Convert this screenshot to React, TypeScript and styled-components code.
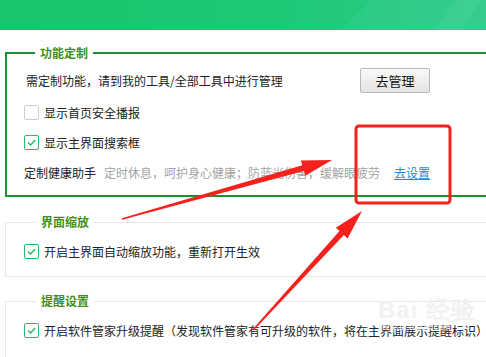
import React from 'react'
import styled, { createGlobalStyle } from 'styled-components'

const GlobalStyle = createGlobalStyle`
  html, body {
    margin: 0;
    padding: 0;
    background: #fff;
  }
  body {
    width: 486px;
    height: 357px;
    overflow: hidden;
    font-family: 'Noto Sans CJK SC', 'Microsoft YaHei', sans-serif;
    font-size: 12px;
    color: #222;
  }
`

const Page = styled.div`
  position: relative;
  width: 486px;
  height: 357px;
  overflow: hidden;
`
const TopBar = styled.div`
  height: 30px;
  background:
    linear-gradient(125deg, transparent 90%, rgba(255, 255, 255, 0.05) 90%, rgba(255, 255, 255, 0.05) 95%, transparent 95%),
    linear-gradient(135deg, transparent 72%, rgba(255, 255, 255, 0.04) 72%),
    linear-gradient(90deg, #19c46c 0%, #1ec876 55%, #2dcb8a 100%);
`
const Body = styled.div`
  padding: 15px 0 0 5px;
  margin-right: -20px;
`
const Group = styled.fieldset<{ $active?: boolean; $gap: number; $pad: string }>`
  margin: ${(p) => p.$gap}px 0 0 0;
  padding: ${(p) => p.$pad};
  border: ${(p) => (p.$active ? '2px solid #1d9130' : '1px solid #e6e6e6')};
  border-radius: 0;
  min-width: 0;
  display: flex;
  flex-direction: column;
  gap: 8px;
`
const Legend = styled.legend<{ $active?: boolean }>`
  margin-left: ${(p) => (p.$active ? 11 : 12)}px;
  padding: 0 5px;
  line-height: 16px;
  font-size: 12px;
  font-weight: bold;
  color: #3f8f1e;
`
const Row = styled.div`
  display: flex;
  align-items: center;
  height: 22px;
  white-space: nowrap;
`
const ManageRow = styled.div`
  display: grid;
  grid-template-columns: 334px auto;
  align-items: center;
  height: 25px;
  padding-left: 2px;
  white-space: nowrap;
`
const Button = styled.button`
  width: 70px;
  height: 25px;
  padding: 0;
  border: 1px solid #b8b8b8;
  border-radius: 2px;
  background: linear-gradient(#fafafa, #e3e3e3);
  font-family: inherit;
  font-size: 13px;
  color: #111;
`
const Box = styled.span<{ $checked?: boolean }>`
  display: inline-flex;
  align-items: center;
  justify-content: center;
  box-sizing: border-box;
  width: 15px;
  height: 15px;
  margin-right: 5px;
  border: 1px solid ${(p) => (p.$checked ? '#22bd68' : '#cccccc')};
  border-radius: 2px;
  background: #fff;
`
const Label = styled.span`
  color: #222;
`
const Muted = styled.span`
  margin-left: 8px;
  color: #a3a3a3;
`
const Link = styled.a`
  margin-left: 14px;
  color: #1a8be6;
  text-decoration: underline;
`
const Marks = styled.svg`
  position: absolute;
  left: 0;
  top: 0;
  pointer-events: none;
`
const Watermark = styled.div`
  position: absolute;
  left: 378px;
  top: 294px;
  display: flex;
  flex-direction: column;
  align-items: flex-start;
  color: #f1f1f1;
  font-family: 'Liberation Sans', Arial, sans-serif;
  pointer-events: none;
`
const WmMain = styled.span`
  font-size: 24px;
  font-weight: bold;
  letter-spacing: 1px;
`
const WmSub = styled.span`
  margin-top: -4px;
  font-size: 9px;
`

const Check = ({ checked, children }: { checked?: boolean; children: React.ReactNode }) => (
  <Row>
    <Box $checked={checked}>
      {checked && (
        <svg width='11' height='11' viewBox='0 0 11 11'>
          <polyline points='2,5.6 4.6,8 9.2,3' fill='none' stroke='#22b866' strokeWidth='1.3' />
        </svg>
      )}
    </Box>
    <Label>{children}</Label>
  </Row>
)

const App = () => (
  <Page>
    <GlobalStyle />
    <TopBar />
    <Body>
      <Group $active $gap={0} $pad='7px 0 12px 17px'>
        <Legend $active>功能定制</Legend>
        <ManageRow>
          <span>需定制功能，请到我的工具/全部工具中进行管理</span>
          <Button>去管理</Button>
        </ManageRow>
        <Check>显示首页安全播报</Check>
        <Check checked>显示主界面搜索框</Check>
        <Row>
          <Label>定制健康助手</Label>
          <Muted>定时休息，呵护身心健康；防蓝光伤害，缓解眼疲劳</Muted>
          <Link>去设置</Link>
        </Row>
      </Group>
      <Group $gap={17} $pad='10px 0 14px 18px'>
        <Legend>界面缩放</Legend>
        <Check checked>开启主界面自动缩放功能，重新打开生效</Check>
      </Group>
      <Group $gap={16} $pad='10px 0 30px 18px'>
        <Legend>提醒设置</Legend>
        <Check checked>开启软件管家升级提醒（发现软件管家有可升级的软件，将在主界面展示提醒标识）</Check>
      </Group>
    </Body>
    <Watermark>
      <WmMain>Bai 经验</WmMain>
      <WmSub>jingyan.baidu.com</WmSub>
    </Watermark>
    <Marks width='486' height='357' viewBox='0 0 486 357'>
      <rect x='356' y='126' width='94' height='77' rx='3' fill='none' stroke='#f5211c' strokeWidth='3' />
      <polygon
        points='121.8,218.2 302.3,165.2 300.9,160.4 332,160 305.3,175.8 303.9,171 122.2,219.8'
        fill='#f5211c'
      />
      <polygon
        points='252.4,329.5 339.5,231.1 335.8,227.7 362,211 347.6,238.5 343.9,235.1 253.6,330.5'
        fill='#f5211c'
      />
    </Marks>
  </Page>
)

export default App
